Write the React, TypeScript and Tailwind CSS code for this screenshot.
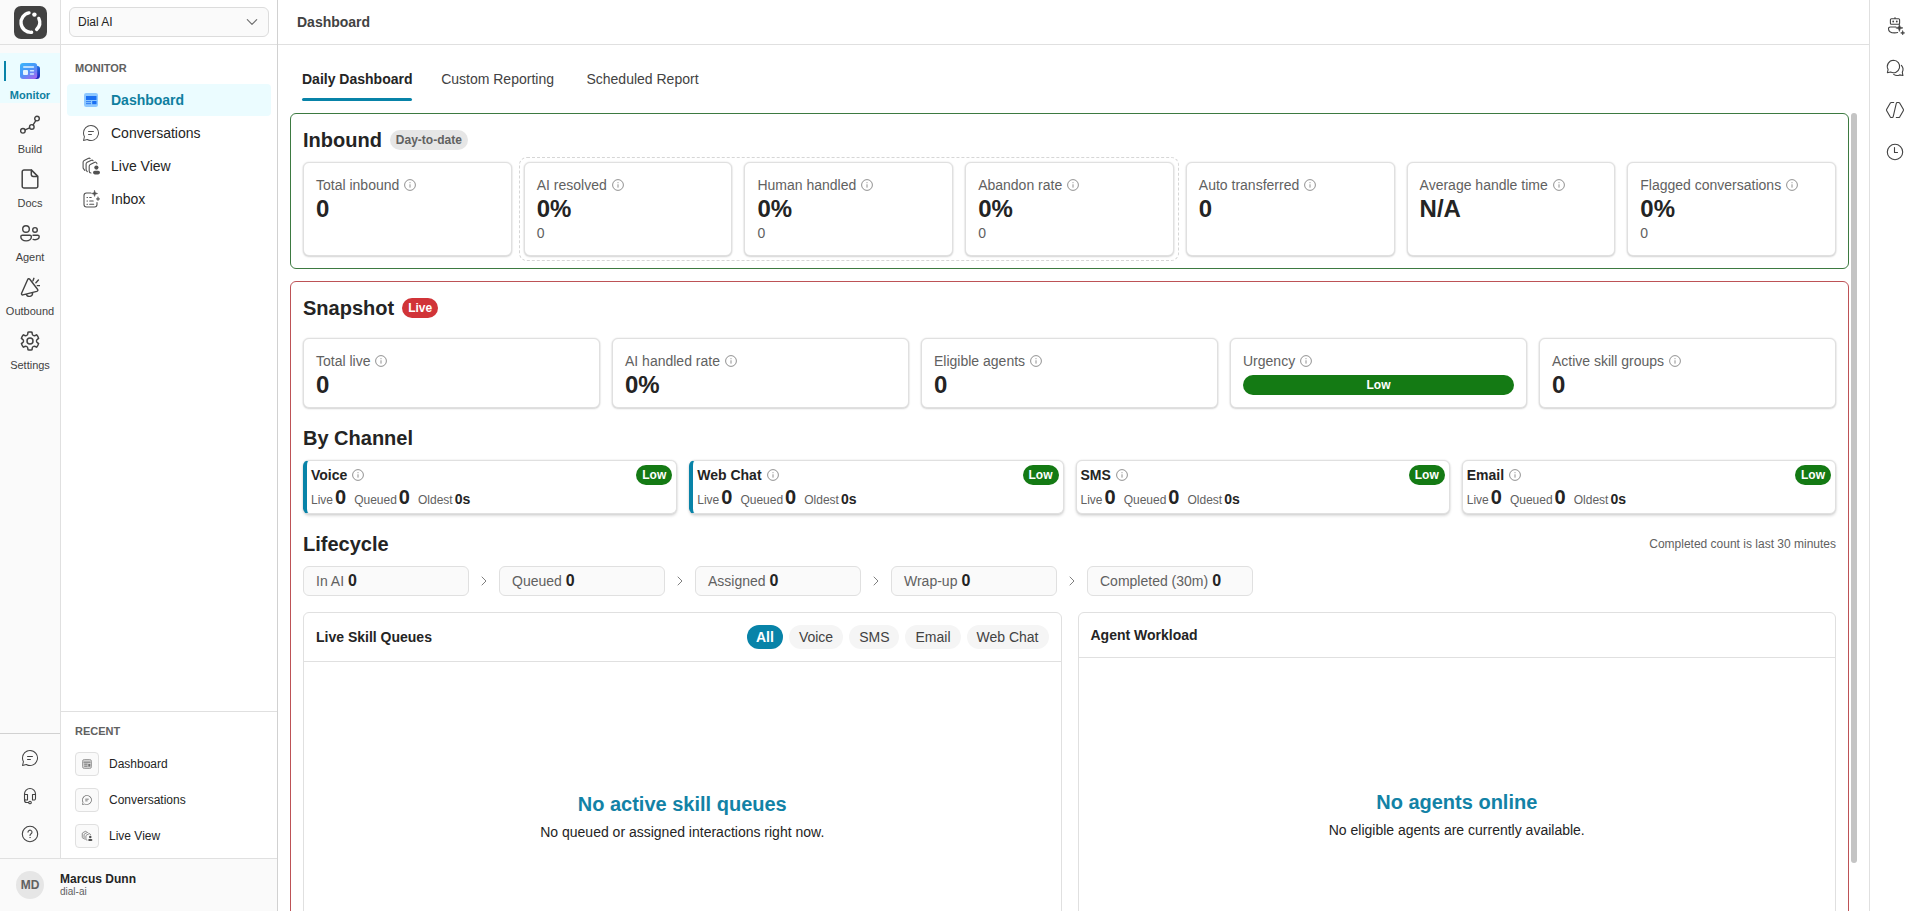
import React from "react";

type IconProps = { className?: string };

const CHAT_PATH =
  "M10 2a8 8 0 1 1-3.61 15.14l-.12-.07-3.65.92a.5.5 0 0 1-.62-.45v-.08l.01-.08.92-3.64-.07-.12a7.95 7.95 0 0 1-.83-2.9l-.02-.37L2 10a8 8 0 0 1 8-8Zm0 1a7 7 0 0 0-6.1 10.42.5.5 0 0 1 .06.28l-.02.1-.75 3.01 3.02-.75a.5.5 0 0 1 .19-.01l.09.02.09.04A7 7 0 1 0 10 3Zm.5 8a.5.5 0 0 1 .09 1H7.5a.5.5 0 0 1-.09-1h3.09Zm2-3a.5.5 0 0 1 .09 1H7.5a.5.5 0 0 1-.09-1h5.09Z";

const GEAR_PATH =
  "M12.01 2.25c.74 0 1.47.1 2.18.25.32.07.55.33.59.65l.17 1.53a1.38 1.38 0 0 0 1.92 1.11l1.4-.61c.3-.13.64-.06.85.17a9.8 9.8 0 0 1 2.2 3.8c.1.3 0 .63-.26.82l-1.24.92a1.38 1.38 0 0 0 0 2.22l1.24.91c.26.19.36.52.27.82a9.8 9.8 0 0 1-2.2 3.8.75.75 0 0 1-.85.18l-1.4-.62a1.38 1.38 0 0 0-1.93 1.12l-.17 1.52a.75.75 0 0 1-.58.65 9.52 9.52 0 0 1-4.4 0 .75.75 0 0 1-.57-.65l-.17-1.52a1.38 1.38 0 0 0-1.93-1.11l-1.4.62a.75.75 0 0 1-.85-.18 9.8 9.8 0 0 1-2.2-3.8c-.1-.3 0-.63.26-.82l1.24-.92a1.38 1.38 0 0 0 0-2.22l-1.24-.91a.75.75 0 0 1-.27-.82 9.8 9.8 0 0 1 2.2-3.8.75.75 0 0 1 .85-.18l1.4.62a1.38 1.38 0 0 0 1.93-1.12l.17-1.53a.75.75 0 0 1 .58-.65c.72-.16 1.45-.24 2.2-.25Zm0 1.5c-.45 0-.9.04-1.35.12l-.11.97a2.89 2.89 0 0 1-4.03 2.33l-.9-.4A8.3 8.3 0 0 0 4.28 9.1l.8.59a2.88 2.88 0 0 1 0 4.64l-.8.59a8.3 8.3 0 0 0 1.35 2.32l.9-.4a2.88 2.88 0 0 1 4.02 2.33l.1.99c.9.15 1.8.15 2.7 0l.1-.99a2.88 2.88 0 0 1 4.02-2.32l.9.4a8.3 8.3 0 0 0 1.36-2.33l-.8-.59a2.88 2.88 0 0 1 0-4.64l.8-.59a8.3 8.3 0 0 0-1.35-2.32l-.9.4a2.88 2.88 0 0 1-4.02-2.32l-.11-.98c-.45-.08-.9-.11-1.34-.12ZM12 8.25a3.75 3.75 0 1 1 0 7.5 3.75 3.75 0 0 1 0-7.5Zm0 1.5a2.25 2.25 0 1 0 0 4.5 2.25 2.25 0 0 0 0-4.5Z";

function LineIcon({ className = "size-5", width = 1, children }: { className?: string; width?: number; children: React.ReactNode }) {
  return (
    <svg viewBox="0 0 20 20" className={className} fill="none" stroke="currentColor" strokeWidth={width} strokeLinecap="round" strokeLinejoin="round" aria-hidden="true">
      {children}
    </svg>
  );
}

function Logo() {
  return (
    <svg viewBox="0 0 33 33" className="size-[33px]" aria-hidden="true">
      <rect width="33" height="33" rx="7" fill="#424242" />
      <g fill="none" stroke="#fff" strokeWidth="3.4" strokeLinecap="round">
        <path d="M15 6.900A9.800 9.800 0 0 0 17.600 26.300" />
        <path d="M24.800 12.400A9.600 9.600 0 0 1 22.600 23.400" />
      </g>
      <circle cx="20.400" cy="8.600" r="2.200" fill="#fff" />
    </svg>
  );
}

function NewsIcon() {
  return (
    <svg viewBox="0 0 20 20" className="size-5" aria-hidden="true">
      <defs>
        <linearGradient id="newsFront" x1="0" y1="0" x2="0.7" y2="1">
          <stop offset="0" stopColor="#3bb6fb" />
          <stop offset="0.55" stopColor="#4a95f8" />
          <stop offset="1" stopColor="#9a6bf0" />
        </linearGradient>
        <linearGradient id="newsBack" x1="0" y1="0" x2="0" y2="1">
          <stop offset="0" stopColor="#1f6fe0" />
          <stop offset="1" stopColor="#1b1bb8" />
        </linearGradient>
      </defs>
      <path d="M15 5h2.500A2.500 2.500 0 0 1 20 7.500v7a3.500 3.500 0 0 1-3.500 3.500H13Z" fill="url(#newsBack)" />
      <rect x="0" y="2" width="17.200" height="16" rx="3" fill="url(#newsFront)" />
      <rect x="3" y="5.200" width="11.200" height="1.600" rx=".8" fill="#e4f4ff" />
      <rect x="3" y="9" width="5" height="5" rx="1" fill="#e4f4ff" />
      <rect x="9.800" y="9" width="4.400" height="1.500" rx=".7" fill="#cfe6ff" />
      <rect x="9.800" y="12.300" width="4.400" height="1.500" rx=".7" fill="#cfe6ff" />
    </svg>
  );
}

function BuildIcon() {
  return (
    <LineIcon width={1.4}>
      <circle cx="2.900" cy="15.800" r="2.300" />
      <circle cx="11.800" cy="11.900" r="2.300" />
      <circle cx="17" cy="3.600" r="2.300" />
      <path d="m5.100 14.900 4.500-2M13.100 9.900l2.700-4.200" />
    </LineIcon>
  );
}

function DocIcon() {
  return (
    <LineIcon width={1.5}>
      <path d="M11.300.900H4A1.800 1.800 0 0 0 2.200 2.700v14.600A1.800 1.800 0 0 0 4 19.100h12a1.800 1.800 0 0 0 1.800-1.800V7.400L11.300.900v4.700a1.800 1.800 0 0 0 1.800 1.800h4.700" />
    </LineIcon>
  );
}

function AgentIcon() {
  return (
    <LineIcon width={1.4}>
      <circle cx="6" cy="6" r="3.300" />
      <circle cx="15" cy="6.900" r="2.300" />
      <path d="M2.400 12.200h7.400c.9 0 1.600.7 1.600 1.600 0 2.300-2.200 4.100-5.300 4.100S.8 16.100.8 13.800c0-.9.700-1.600 1.600-1.600ZM13 12.200h4.700c.9 0 1.500.6 1.500 1.400 0 1.900-1.700 3.100-4.200 3.100-.7 0-1.300-.1-1.900-.3" />
    </LineIcon>
  );
}

function MegaphoneIcon() {
  return (
    <LineIcon width={1.4}>
      <path d="M7.700 2.500 1.600 16.200c-.4.900.3 1.900 1.300 1.700l13.900-3.500c1-.3 1.400-1.400.7-2.200L9.800 2.200c-.6-.7-1.700-.6-2.100.3ZM6.300 17.200a3.200 3.200 0 0 0 6.200-1.500M13 3.800l.9-2.500M15.900 5.700l2.500-2.600M17.300 8.600h2.200" />
    </LineIcon>
  );
}

function GearIcon() {
  return (
    <svg viewBox="2 2 20 20" className="size-5" fill="currentColor" aria-hidden="true">
      <path d={GEAR_PATH} />
    </svg>
  );
}

function ChatIcon({ className = "size-5" }: IconProps) {
  return (
    <svg viewBox="0 0 20 20" className={className} fill="currentColor" aria-hidden="true">
      <path d={CHAT_PATH} />
    </svg>
  );
}

function HeadsetIcon() {
  return (
    <LineIcon width={1.1}>
      <path d="M4.500 8.500V8a5.500 5.500 0 0 1 11 0v.5M6 8.500H4.500v4A1.500 1.500 0 0 0 6 14h1.500V8.500H6ZM14 8.500h1.500v4A1.500 1.500 0 0 1 14 14h-1.500V8.500H14ZM4.500 12.500v1.700a2.300 2.300 0 0 0 2.300 2.300h1.700" />
      <circle cx="10" cy="16.500" r="1.300" />
    </LineIcon>
  );
}

function HelpIcon() {
  return (
    <LineIcon width={1.1}>
      <circle cx="10" cy="10" r="7.700" />
      <path d="M8 8.100a2 2 0 1 1 3.100 1.700c-.7.500-1.100.9-1.100 1.700" />
      <circle cx="10" cy="13.600" r=".4" fill="currentColor" strokeWidth=".4" />
    </LineIcon>
  );
}

function BoardColorIcon() {
  return (
    <svg viewBox="0 0 16 16" className="size-4" aria-hidden="true">
      <rect x="1" y="1" width="14" height="14" rx="2.200" fill="#8ec8ff" />
      <rect x="3" y="4" width="10.500" height="4" fill="#1a6ff2" />
      <rect x="3" y="9" width="5" height="1.200" fill="#3a86f5" />
      <rect x="3" y="11" width="5" height="1.200" fill="#3a86f5" />
      <rect x="9.200" y="9" width="4.300" height="3.200" fill="#1a6ff2" />
    </svg>
  );
}

function BoardGrayIcon() {
  return (
    <svg viewBox="0 0 12 12" className="size-3" aria-hidden="true">
      <rect x="1.500" y="1.500" width="9" height="9" rx="1.800" fill="#cfcfcf" stroke="#8f8f8f" strokeWidth=".8" />
      <path d="M2.500 4.200h7M3.200 6.200h3.300M3.200 8.200h3.300" stroke="#707070" strokeWidth=".9" />
      <rect x="7.300" y="6" width="2" height="2.600" fill="#707070" />
    </svg>
  );
}

function LiveViewIcon({ className = "size-5" }: IconProps) {
  return (
    <LineIcon className={className} width={1.1}>
      <path d="M3.800 14.300 2.600 12.900a2 2 0 0 1-.5-1.400V6.200a2 2 0 0 1 1.100-1.800l3.900-2c.8-.4 1.600-.4 2 .2M6.300 15.600l-.8-1a2 2 0 0 1-.4-1.300V8.100a2 2 0 0 1 1.100-1.800l3.700-1.900c.9-.4 1.800-.3 2.200.3M10 17c-1.100 0-1.800-.9-1.800-2v-4.800a2 2 0 0 1 1.100-1.800l4-2c1.300-.6 2.600.1 2.600 1.400" />
      <circle cx="15.400" cy="11.600" r="2.100" fill="currentColor" stroke="none" />
      <rect x="12" y="14.800" width="7" height="3.600" rx="1.800" fill="currentColor" stroke="none" />
    </LineIcon>
  );
}

function InboxIcon() {
  return (
    <LineIcon className="size-5" width={1.1}>
      <path d="M10 4H5.500A2.500 2.500 0 0 0 3 6.500v9A2.500 2.500 0 0 0 5.500 18h8a2.500 2.500 0 0 0 2.500-2.500v-2M6 8.500h.5M8.700 8.500h1.500M6 12h.5M8.700 12h3.500M6 15.200h.5M8.700 15.200h4" />
      <path d="m13.600 1.500.8 2.200 2.200.8-2.200.8-.8 2.200-.8-2.200-2.200-.8 2.200-.8ZM17 8l.5 1.400 1.400.5-1.400.5-.5 1.400-.5-1.400-1.400-.5 1.400-.5Z" fill="currentColor" strokeWidth=".5" />
    </LineIcon>
  );
}

function BotIcon() {
  return (
    <LineIcon width={1.1}>
      <path d="M10 1.600v1M6.400 2.700h7.200c.6 0 1 .4 1 1v3.600c0 .6-.4 1-1 1H6.400c-.6 0-1-.4-1-1V3.700c0-.6.4-1 1-1ZM11 11H5.200A1.700 1.700 0 0 0 3.500 12.700c0 2.500 2.600 4.200 6.200 4.200 1.100 0 2-.1 2.900-.4" />
      <circle cx="8.200" cy="5.500" r=".9" fill="currentColor" stroke="none" />
      <circle cx="11.800" cy="5.500" r=".9" fill="currentColor" stroke="none" />
      <path d="m14.400 8.300.9 2.700 2.700.9-2.700.9-.9 2.700-.9-2.700-2.700-.9 2.700-.9ZM17.700 14.800l.6 1.500 1.500.6-1.500.6-.6 1.500-.6-1.500-1.500-.6 1.500-.6Z" fill="currentColor" strokeWidth=".5" />
    </LineIcon>
  );
}

function ChatsIcon() {
  return (
    <LineIcon width={1.1}>
      <path d="M8.500 2.300a6.200 6.200 0 1 1-2.900 11.700l-3.200.7.700-3.200A6.200 6.200 0 0 1 8.500 2.300Z" />
      <path d="M16.400 7.300a6.200 6.200 0 0 1 .9 6.900l.6 3.300-3.300-.6a6.200 6.200 0 0 1-5.900-.5" />
    </LineIcon>
  );
}

function CodeIcon() {
  return (
    <LineIcon width={1.1}>
      <path d="M8.700 2.500H6.400c-.5 0-.9.300-1.200.7L1.700 9.300c-.3.500-.3 1 0 1.400l3.500 6.100c.3.400.7.700 1.200.7h.8c.5 0 .9-.3 1-.8L11.300 3.300c.1-.5.500-.8 1-.8h1.300c.5 0 .9.300 1.200.7l3.500 6.100c.3.500.3 1 0 1.400l-3.500 6.100c-.3.400-.7.700-1.200.7h-2.300" />
    </LineIcon>
  );
}

function ClockIcon() {
  return (
    <LineIcon width={1.1}>
      <circle cx="10" cy="10" r="7.700" />
      <path d="M9.500 5.500V10.500h3" />
    </LineIcon>
  );
}

function InfoIcon() {
  return (
    <svg viewBox="0 0 12 12" className="size-3 shrink-0 text-[#757575]" fill="none" stroke="currentColor" strokeWidth=".8" aria-hidden="true">
      <circle cx="6" cy="6" r="5.400" />
      <path d="M6 5.300v3.300M6 3.200v1" />
    </svg>
  );
}

function Chevron({ className }: IconProps) {
  return (
    <svg viewBox="0 0 12 12" className={className} fill="none" stroke="currentColor" strokeWidth="1" strokeLinecap="round" strokeLinejoin="round" aria-hidden="true">
      <path d="m4 2 4 4-4 4" />
    </svg>
  );
}

const railItems = [
  { label: "Build", icon: <BuildIcon /> },
  { label: "Docs", icon: <DocIcon /> },
  { label: "Agent", icon: <AgentIcon /> },
  { label: "Outbound", icon: <MegaphoneIcon /> },
  { label: "Settings", icon: <GearIcon /> },
];

function Rail() {
  return (
    <nav aria-label="Primary" className="flex w-[61px] shrink-0 flex-col border-r border-[#e0e0e0] bg-[#fafafa]">
      <a href="#home" aria-label="Home" className="flex h-[45px] shrink-0 items-center justify-center border-b border-[#e0e0e0]">
        <Logo />
      </a>
      <ul className="flex flex-col gap-1 pt-2 text-[11px] leading-4 text-[#424242]">
        <li>
          <a href="#monitor" aria-current="page" className="relative flex h-[50px] flex-col items-center gap-[6px] bg-[#ebfcff] pt-2 font-bold text-[#0f7f9f]">
            <span className="absolute top-2 left-1 h-5 w-[2px] bg-[#0883a8]" />
            <span className="flex size-5 items-center justify-center"><NewsIcon /></span>
            Monitor
          </a>
        </li>
        {railItems.map((item) => (
          <li key={item.label}>
            <a href={"#" + item.label.toLowerCase()} className="flex h-[50px] flex-col items-center gap-[6px] pt-2">
              <span className="flex size-5 items-center justify-center">{item.icon}</span>
              {item.label}
            </a>
          </li>
        ))}
      </ul>
      <div className="mt-auto flex flex-col items-center gap-[18px] border-t border-[#d1d1d1] pt-[14px] pb-[14px] text-[#424242]">
        <button type="button" aria-label="Feedback"><ChatIcon /></button>
        <button type="button" aria-label="Support"><HeadsetIcon /></button>
        <button type="button" aria-label="Help"><HelpIcon /></button>
      </div>
    </nav>
  );
}

function SidePanel() {
  const links = [
    { label: "Conversations", icon: <ChatIcon className="size-5" /> },
    { label: "Live View", icon: <LiveViewIcon /> },
    { label: "Inbox", icon: <InboxIcon /> },
  ];
  const recent = [
    { label: "Dashboard", icon: <BoardGrayIcon /> },
    { label: "Conversations", icon: <ChatIcon className="size-3" /> },
    { label: "Live View", icon: <LiveViewIcon className="size-3" /> },
  ];
  return (
    <aside className="flex min-w-0 flex-1 flex-col">
      <div className="flex h-[45px] shrink-0 items-center border-b border-[#e0e0e0] px-2">
        <div className="relative w-full">
          <select aria-label="Workspace" className="h-[30px] w-full appearance-none rounded-md border border-[#dcdcdc] bg-[#fafafa] pl-2 text-xs text-[#242424]">
            <option>Dial AI</option>
          </select>
          <Chevron className="pointer-events-none absolute top-2 right-[10px] size-[14px] rotate-90 text-[#707070]" />
        </div>
      </div>
      <div className="px-[6px] pt-[15px]">
        <h2 className="px-2 text-[11px] leading-4 font-bold text-[#616161]">MONITOR</h2>
        <ul className="flex flex-col gap-px pt-2 text-sm text-[#242424]">
          <li>
            <a href="#dashboard" aria-current="page" className="flex h-8 items-center gap-[10px] rounded bg-[#ebfcff] pl-[14px] font-bold text-[#0f7f9f]">
              <span className="flex size-5 items-center justify-center"><BoardColorIcon /></span>
              Dashboard
            </a>
          </li>
          {links.map((link) => (
            <li key={link.label}>
              <a href={"#" + link.label.toLowerCase()} className="flex h-8 items-center gap-[10px] pl-[14px]">
                <span className="text-[#525252]">{link.icon}</span>
                {link.label}
              </a>
            </li>
          ))}
        </ul>
      </div>
      <div className="mt-auto border-t border-[#e0e0e0] px-[14px] pt-[11px] pb-[10px]">
        <h2 className="text-[11px] leading-4 font-bold text-[#616161]">RECENT</h2>
        <ul className="flex flex-col gap-3 pt-[13px] text-xs text-[#242424]">
          {recent.map((item) => (
            <li key={item.label}>
              <a href={"#recent-" + item.label.toLowerCase()} className="flex h-6 items-center gap-[10px]">
                <span className="flex size-6 items-center justify-center rounded border border-[#e0e0e0] bg-[#fafafa] text-[#525252]">{item.icon}</span>
                {item.label}
              </a>
            </li>
          ))}
        </ul>
      </div>
    </aside>
  );
}

function MetricCard({ label, value, sub, roomy }: { label: string; value: React.ReactNode; sub?: string; roomy?: boolean }) {
  return (
    <div className={"rounded-md border border-[#e0e0e0] bg-white px-3 pt-3 shadow-[0_1px_2px_rgba(0,0,0,0.14),0_0_2px_rgba(0,0,0,0.12)] " + (roomy ? "min-h-[94px] pb-3" : "pb-2")}>
      <div className="flex items-center gap-[5px] text-sm leading-5 text-[#616161]">
        {label}
        <InfoIcon />
      </div>
      <div className="flex h-7 items-center text-2xl leading-7 font-bold text-[#242424]">{value}</div>
      {sub && <div className="text-sm leading-5 text-[#616161]">{sub}</div>}
    </div>
  );
}

function SectionTitle({ children }: { children: React.ReactNode }) {
  return <h2 className="text-xl leading-7 font-bold text-[#242424]">{children}</h2>;
}

function Inbound() {
  return (
    <section className="rounded-md border border-[#3d7a41] p-3">
      <div className="flex items-center gap-2">
        <SectionTitle>Inbound</SectionTitle>
        <span className="rounded-full bg-[#e6e6e6] px-[6px] text-xs leading-5 font-bold text-[#616161]">Day-to-date</span>
      </div>
      <div className="mt-2 grid grid-cols-7 gap-3">
        <MetricCard roomy label="Total inbound" value="0" />
        <div className="relative col-span-3 grid grid-cols-3 gap-3">
          <div className="pointer-events-none absolute -inset-[5px] rounded-lg border border-dashed border-[#d6d6d6]" />
          <MetricCard roomy label="AI resolved" value="0%" sub="0" />
          <MetricCard roomy label="Human handled" value="0%" sub="0" />
          <MetricCard roomy label="Abandon rate" value="0%" sub="0" />
        </div>
        <MetricCard roomy label="Auto transferred" value="0" />
        <MetricCard roomy label="Average handle time" value="N/A" />
        <MetricCard roomy label="Flagged conversations" value="0%" sub="0" />
      </div>
    </section>
  );
}

const channels = [
  { name: "Voice", accent: true },
  { name: "Web Chat", accent: true },
  { name: "SMS", accent: false },
  { name: "Email", accent: false },
];

function ChannelStat({ label, value, small }: { label: string; value: string; small?: boolean }) {
  return (
    <span className="flex items-baseline gap-[2px]">
      <span className="text-xs text-[#616161]">{label}</span>
      <span className={"font-bold text-[#242424] " + (small ? "text-sm leading-6" : "text-xl leading-6")}>{value}</span>
    </span>
  );
}

function ChannelCard({ name, accent }: { name: string; accent: boolean }) {
  return (
    <div className={"rounded-md border border-[#e0e0e0] bg-white p-1 shadow-[0_2px_3px_rgba(0,0,0,0.14),0_0_2px_rgba(0,0,0,0.12)] " + (accent ? "border-l-4 border-l-[#0883a8]" : "")}>
      <div className="flex items-center justify-between">
        <h3 className="flex items-center gap-[5px] text-sm leading-5 font-bold text-[#242424]">
          {name}
          <InfoIcon />
        </h3>
        <span className="rounded-full bg-[#147a14] px-[6px] text-xs leading-5 font-bold text-white">Low</span>
      </div>
      <div className="flex h-6 items-baseline gap-2">
        <ChannelStat label="Live" value="0" />
        <ChannelStat label="Queued" value="0" />
        <ChannelStat label="Oldest" value="0s" small />
      </div>
    </div>
  );
}

function Panel({ title, filters, emptyTitle, emptyText }: { title: string; filters?: string[]; emptyTitle: string; emptyText: string }) {
  return (
    <div className="flex min-h-[359px] flex-col rounded-md border border-[#e0e0e0]">
      <div className="flex items-center justify-between border-b border-[#e0e0e0] p-3">
        <h3 className="text-sm leading-5 font-bold text-[#242424]">{title}</h3>
        {filters && (
          <div className="flex gap-[6px]">
            {filters.map((filter, i) => (
              <button
                key={filter}
                type="button"
                aria-pressed={i === 0}
                className={"h-6 rounded-full text-sm " + (i === 0 ? "bg-[#0883a8] px-[9px] font-bold text-white" : "bg-[#f5f5f5] px-[10px] text-[#424242]")}
              >
                {filter}
              </button>
            ))}
          </div>
        )}
      </div>
      <div className="flex flex-1 flex-col items-center justify-center gap-1">
        <p className="text-xl leading-7 font-bold text-[#1282a6]">{emptyTitle}</p>
        <p className="text-sm leading-5 text-[#242424]">{emptyText}</p>
      </div>
    </div>
  );
}

function Snapshot() {
  const stages = ["In AI", "Queued", "Assigned", "Wrap-up", "Completed (30m)"];
  return (
    <section className="mt-3 rounded-md border border-[#bd5256] p-3">
      <div className="flex items-center gap-2">
        <SectionTitle>Snapshot</SectionTitle>
        <span className="rounded-full bg-[#d13438] px-[6px] text-xs leading-5 font-bold text-white">Live</span>
      </div>
      <div className="mt-4 grid grid-cols-5 gap-3">
        <MetricCard label="Total live" value="0" />
        <MetricCard label="AI handled rate" value="0%" />
        <MetricCard label="Eligible agents" value="0" />
        <MetricCard label="Urgency" value={<span className="w-full rounded-full bg-[#147a14] text-center text-xs leading-5 text-white">Low</span>} />
        <MetricCard label="Active skill groups" value="0" />
      </div>
      <div className="mt-4">
        <SectionTitle>By Channel</SectionTitle>
      </div>
      <div className="mt-2 grid grid-cols-4 gap-3">
        {channels.map((channel) => (
          <ChannelCard key={channel.name} name={channel.name} accent={channel.accent} />
        ))}
      </div>
      <div className="mt-4 flex items-center justify-between">
        <SectionTitle>Lifecycle</SectionTitle>
        <span className="text-xs text-[#616161]">Completed count is last 30 minutes</span>
      </div>
      <ol className="mt-2 flex items-center">
        {stages.map((stage, i) => (
          <li key={stage} className="flex items-center">
            {i > 0 && <Chevron className="mx-[9px] size-3 text-[#808080]" />}
            <span className="flex h-[30px] w-[166px] items-baseline gap-1 rounded-md border border-[#e0e0e0] bg-[#fafafa] px-3 pt-[3px] text-sm leading-[22px] text-[#616161]">
              {stage}
              <strong className="text-base leading-[22px] text-[#242424]">0</strong>
            </span>
          </li>
        ))}
      </ol>
      <div className="mt-4 grid grid-cols-2 gap-4">
        <Panel title="Live Skill Queues" filters={["All", "Voice", "SMS", "Email", "Web Chat"]} emptyTitle="No active skill queues" emptyText="No queued or assigned interactions right now." />
        <Panel title="Agent Workload" emptyTitle="No agents online" emptyText="No eligible agents are currently available." />
      </div>
    </section>
  );
}

function Tabs() {
  const tabs = ["Daily Dashboard", "Custom Reporting", "Scheduled Report"];
  return (
    <div role="tablist" className="flex gap-6 px-6 pt-3 pb-3 text-sm leading-5">
      {tabs.map((tab, i) => (
        <button
          key={tab}
          type="button"
          role="tab"
          aria-selected={i === 0}
          data-label={tab}
          className={
            "relative flex h-11 flex-col items-center pt-3 after:invisible after:h-0 after:overflow-hidden after:font-bold after:content-[attr(data-label)] " +
            (i === 0 ? "font-bold text-[#242424]" : "text-[#424242]")
          }
        >
          {tab}
          {i === 0 && <span className="absolute right-0 bottom-0 left-0 h-[3px] rounded-full bg-[#0883a8]" />}
        </button>
      ))}
    </div>
  );
}

export default function App() {
  return (
    <div className="flex h-screen overflow-hidden bg-white font-['Liberation_Sans',Arial,sans-serif] text-[#242424]">
      <div className="flex w-[278px] shrink-0 flex-col border-r border-[#d1d1d1]">
        <div className="flex min-h-0 flex-1">
          <Rail />
          <SidePanel />
        </div>
        <div className="flex h-[53px] shrink-0 items-center gap-4 border-t border-[#e0e0e0] bg-[#fafafa] px-4">
          <span className="flex size-7 items-center justify-center rounded-full bg-[#e6e6e6] text-xs font-bold text-[#616161]">MD</span>
          <span className="flex flex-col">
            <span className="text-xs leading-[14px] font-bold">Marcus Dunn</span>
            <span className="text-[10px] leading-3 text-[#616161]">dial-ai</span>
          </span>
        </div>
      </div>
      <main className="flex min-w-0 flex-1 flex-col">
        <header className="flex h-[45px] shrink-0 items-center border-b border-[#e0e0e0] px-[19px]">
          <h1 className="text-sm font-bold text-[#424242]">Dashboard</h1>
        </header>
        <Tabs />
        <div className="flex min-h-0 flex-1 pr-3 pl-3">
          <div className="min-w-0 flex-1 overflow-y-auto [scrollbar-width:none]">
            <Inbound />
            <Snapshot />
          </div>
          <div className="ml-[2px] h-[94%] w-[6px] rounded-full bg-[#c4c4c4]" />
        </div>
      </main>
      <aside className="flex w-[51px] shrink-0 flex-col items-center gap-[22px] border-l border-[#e0e0e0] pt-4 text-[#424242]">
        <button type="button" aria-label="Assistant"><BotIcon /></button>
        <button type="button" aria-label="Chats"><ChatsIcon /></button>
        <button type="button" aria-label="Code"><CodeIcon /></button>
        <button type="button" aria-label="History"><ClockIcon /></button>
      </aside>
    </div>
  );
}
